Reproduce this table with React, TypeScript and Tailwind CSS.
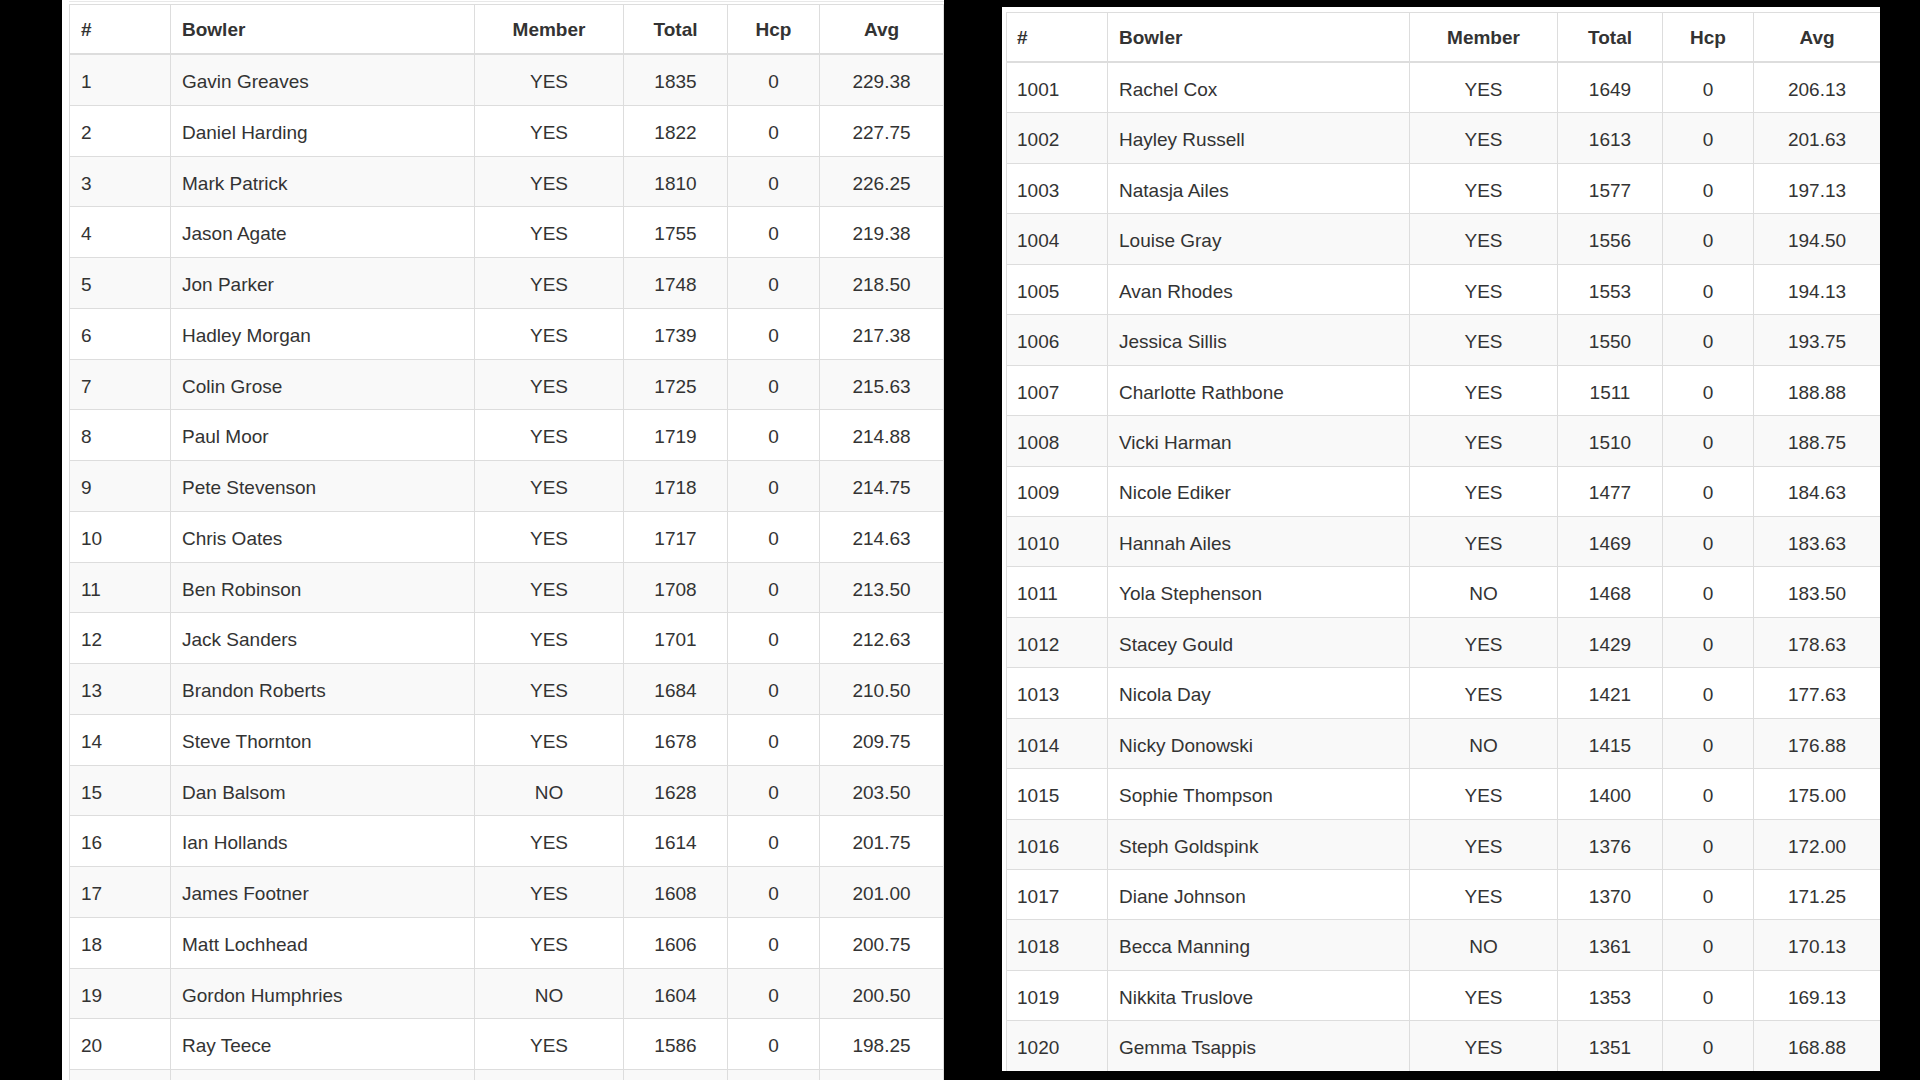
import React from 'react';

type Row = [string, string, string, string, string, string];

const leftRows: Row[] = [
  ['1', 'Gavin Greaves', 'YES', '1835', '0', '229.38'],
  ['2', 'Daniel Harding', 'YES', '1822', '0', '227.75'],
  ['3', 'Mark Patrick', 'YES', '1810', '0', '226.25'],
  ['4', 'Jason Agate', 'YES', '1755', '0', '219.38'],
  ['5', 'Jon Parker', 'YES', '1748', '0', '218.50'],
  ['6', 'Hadley Morgan', 'YES', '1739', '0', '217.38'],
  ['7', 'Colin Grose', 'YES', '1725', '0', '215.63'],
  ['8', 'Paul Moor', 'YES', '1719', '0', '214.88'],
  ['9', 'Pete Stevenson', 'YES', '1718', '0', '214.75'],
  ['10', 'Chris Oates', 'YES', '1717', '0', '214.63'],
  ['11', 'Ben Robinson', 'YES', '1708', '0', '213.50'],
  ['12', 'Jack Sanders', 'YES', '1701', '0', '212.63'],
  ['13', 'Brandon Roberts', 'YES', '1684', '0', '210.50'],
  ['14', 'Steve Thornton', 'YES', '1678', '0', '209.75'],
  ['15', 'Dan Balsom', 'NO', '1628', '0', '203.50'],
  ['16', 'Ian Hollands', 'YES', '1614', '0', '201.75'],
  ['17', 'James Footner', 'YES', '1608', '0', '201.00'],
  ['18', 'Matt Lochhead', 'YES', '1606', '0', '200.75'],
  ['19', 'Gordon Humphries', 'NO', '1604', '0', '200.50'],
  ['20', 'Ray Teece', 'YES', '1586', '0', '198.25'],
  ['', '', '', '', '', ''],
];

const rightRows: Row[] = [
  ['1001', 'Rachel Cox', 'YES', '1649', '0', '206.13'],
  ['1002', 'Hayley Russell', 'YES', '1613', '0', '201.63'],
  ['1003', 'Natasja Ailes', 'YES', '1577', '0', '197.13'],
  ['1004', 'Louise Gray', 'YES', '1556', '0', '194.50'],
  ['1005', 'Avan Rhodes', 'YES', '1553', '0', '194.13'],
  ['1006', 'Jessica Sillis', 'YES', '1550', '0', '193.75'],
  ['1007', 'Charlotte Rathbone', 'YES', '1511', '0', '188.88'],
  ['1008', 'Vicki Harman', 'YES', '1510', '0', '188.75'],
  ['1009', 'Nicole Ediker', 'YES', '1477', '0', '184.63'],
  ['1010', 'Hannah Ailes', 'YES', '1469', '0', '183.63'],
  ['1011', 'Yola Stephenson', 'NO', '1468', '0', '183.50'],
  ['1012', 'Stacey Gould', 'YES', '1429', '0', '178.63'],
  ['1013', 'Nicola Day', 'YES', '1421', '0', '177.63'],
  ['1014', 'Nicky Donowski', 'NO', '1415', '0', '176.88'],
  ['1015', 'Sophie Thompson', 'YES', '1400', '0', '175.00'],
  ['1016', 'Steph Goldspink', 'YES', '1376', '0', '172.00'],
  ['1017', 'Diane Johnson', 'YES', '1370', '0', '171.25'],
  ['1018', 'Becca Manning', 'NO', '1361', '0', '170.13'],
  ['1019', 'Nikkita Truslove', 'YES', '1353', '0', '169.13'],
  ['1020', 'Gemma Tsappis', 'YES', '1351', '0', '168.88'],
];

const headers = ['#', 'Bowler', 'Member', 'Total', 'Hcp', 'Avg'];

interface StandingsTableProps {
  rows: Row[];
  cols: string;
  rowHeight: string;
  firstPad: string;
  grayOdd: boolean;
}

function StandingsTable({ rows, cols, rowHeight, firstPad, grayOdd }: StandingsTableProps) {
  const cell = (i: number) =>
    i === 0 ? `${firstPad} justify-start` : i === 1 ? 'pl-[11px] justify-start' : 'justify-center';

  return (
    <div className="border-l border-t border-[#ddd]">
      <div className={`grid ${cols} bg-white`}>
        {headers.map((h, i) => (
          <div
            key={h}
            className={`flex h-[50px] items-center border-b-2 border-r border-[#ddd] pt-[3px] font-bold text-[#333] ${cell(i)}`}
          >
            {h}
          </div>
        ))}
      </div>
      {rows.map((row, r) => {
        // striping differs between the two screenshots
        const gray = grayOdd ? r % 2 === 0 : r % 2 === 1;
        return (
          <div key={r} className={`grid ${cols} ${gray ? 'bg-[#f9f9f9]' : 'bg-white'}`}>
            {row.map((v, i) => (
              <div
                key={i}
                className={`flex ${rowHeight} items-center border-b border-r border-[#ddd] pt-[5px] ${cell(i)}`}
              >
                {v}
              </div>
            ))}
          </div>
        );
      })}
    </div>
  );
}

export default function App() {
  return (
    <div className="flex h-[1080px] w-[1920px] items-start overflow-hidden bg-black font-['Liberation_Sans',Arial,sans-serif] text-[19px] text-[#333]">
      <div className="ml-[62px] h-[1080px] w-[882px] overflow-hidden bg-white pl-[7px]">
        <div className="mt-px h-px bg-[#e8e8e8]" />
        <div className="mt-[2px]">
          <StandingsTable
            rows={leftRows}
            cols="grid-cols-[101px_304px_149px_104px_92px_124px]"
            rowHeight="h-[50.75px]"
            firstPad="pl-[11px]"
            grayOdd
          />
        </div>
      </div>
      <div className="ml-[58px] mt-[7px] h-[1064px] w-[878px] overflow-hidden bg-white pl-[4px] pt-[5px]">
        <StandingsTable
          rows={rightRows}
          cols="grid-cols-[101px_302px_148px_105px_91px_127px]"
          rowHeight="h-[50.45px]"
          firstPad="pl-[10px]"
          grayOdd={false}
        />
      </div>
    </div>
  );
}
